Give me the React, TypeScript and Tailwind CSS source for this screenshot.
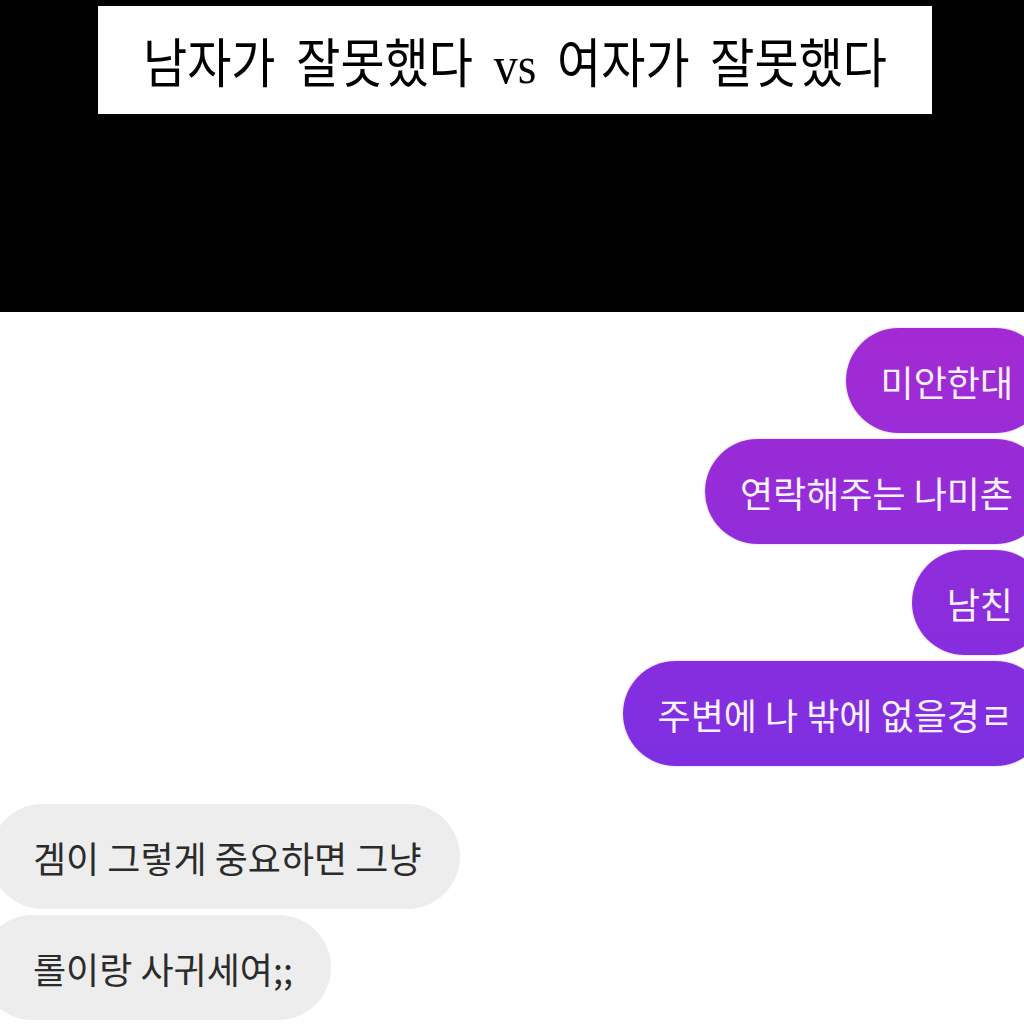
import React from 'react';

const sent = ['미안한대', '연락해주는 나미촌', '남친', '주변에 나 밖에 없을경ㄹ'];
const received = ['겜이 그렇게 중요하면 그냥', '롤이랑 사귀세여;;'];

export default function App() {
  return (
    <div className="w-[1024px] h-[1024px] overflow-hidden bg-white font-['Noto_Sans_CJK_KR','Noto_Sans',sans-serif]">
      {/* black header with caption */}
      <div className="h-[312px] bg-black pt-[6px] pl-[98px]">
        <div className="w-[834px] h-[108px] bg-white flex items-center justify-center">
          <span className="text-[48px] [word-spacing:10px] text-black leading-none scale-y-[1.12] mt-[4px] whitespace-nowrap">
            남자가 잘못했다 <span className="font-['Liberation_Serif',serif]">vs</span> 여자가 잘못했다
          </span>
        </div>
      </div>

      {/* chat */}
      <div className="pt-[16px] flex flex-col">
        <div className="flex flex-col items-end gap-[6px]">
          {sent.map((m) => (
            <div
              key={m}
              className="h-[105px] mr-[-24px] pl-[35px] pr-[35px] rounded-full flex items-center bg-fixed bg-[linear-gradient(180deg,#a42ad2_320px,#7d2fe2_770px)] text-[#fdf2ff] text-[36px] shadow-[0_0_2px_rgba(120,40,200,0.4)] whitespace-nowrap"
            >
              {m}
            </div>
          ))}
        </div>

        <div className="mt-[38px] flex flex-col items-start gap-[6px]">
          {received.map((m, i) => (
            <div
              key={m}
              className={
                'h-[105px] pr-[38px] rounded-full flex items-center bg-[#ededed] text-[#2b2b2b] text-[36px] whitespace-nowrap ' +
                (i === 0 ? 'ml-[-10px] pl-[43px]' : 'ml-[-20px] pl-[53px]')
              }
            >
              {m}
            </div>
          ))}
        </div>
      </div>
    </div>
  );
}
